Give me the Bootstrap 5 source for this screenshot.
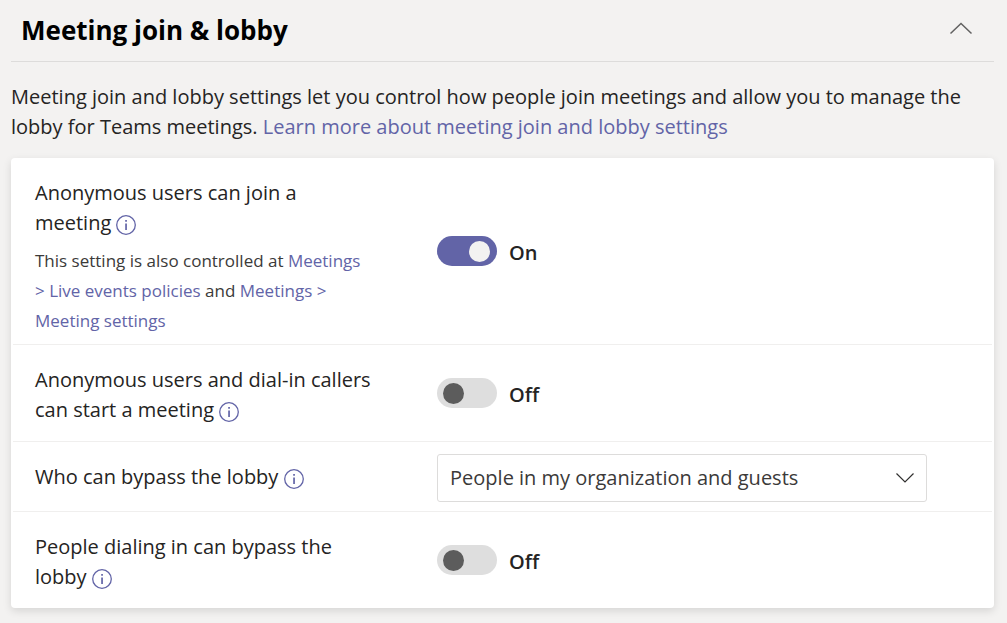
<!DOCTYPE html>
<html lang="en">
<head>
<meta charset="utf-8">
<meta name="viewport" content="width=device-width, initial-scale=1">
<title>Meeting join &amp; lobby</title>
<link href="https://cdn.jsdelivr.net/npm/bootstrap@5.3.0/dist/css/bootstrap.min.css" rel="stylesheet">
<style>
body{background:#f3f2f1;color:#252423;font:20px/30px "Open Sans",sans-serif}
a{color:#6264a7;text-decoration:none}
a:hover{text-decoration:underline}
.policy-section{padding:0 13px 14px 11px}
.section-head{padding:0 18px 2px 10px;height:62px;border-bottom:1px solid #dddcdb}
.section-title{font-size:26px;font-weight:700;line-height:36px;color:#000}
.section-intro{margin:20px 0 16px}
.collapse-btn{color:#616161;line-height:0}
.settings-card{border:0;border-radius:4px;padding:0 2px;box-shadow:0 3px 8px rgba(0,0,0,.12)}
.setting-row{padding:0 22px}
.setting-row + .setting-row{border-top:1px solid #f0efee}
.setting-name{flex:0 0 43%;padding:20px 64px 16px 0}
.setting-name label{display:inline}
.setting-control{flex:1 1 0;min-width:0}
.has-note .setting-name{padding-bottom:8px}
.has-select .setting-name{padding:20px 64px 19px 0}
.has-select .setting-control{padding:12px 0 9px}
.setting-note{font-size:17px;margin:8px 0 0;color:#3b3a39}
.info-btn{color:#6264a7;line-height:0;vertical-align:-5px}
.info-btn svg{display:block}
.form-switch .form-check-input.policy-toggle{width:60px;height:30px;margin:0;border:0;background-color:#dedede;background-size:60px 30px;background-position:center;
background-image:url("data:image/svg+xml,%3csvg xmlns='http://www.w3.org/2000/svg' viewBox='0 0 60 30'%3e%3ccircle cx='16.5' cy='15.5' r='10.5' fill='%235c5c5c'/%3e%3c/svg%3e")}
.form-switch .form-check-input.policy-toggle:checked{background-color:#6264a7;
background-image:url("data:image/svg+xml,%3csvg xmlns='http://www.w3.org/2000/svg' viewBox='0 0 60 30'%3e%3ccircle cx='42.5' cy='15.5' r='10.5' fill='%23f3f2f1'/%3e%3c/svg%3e")}
.toggle-state{font-weight:600;padding:3px 0 0 12px}
.form-select.policy-select{display:block;width:92%;height:48px;padding:8px 40px 8px 12px;font-size:20px;line-height:30px;color:#3b3a39;border:1px solid #dddcdb;border-radius:3px;background-color:#fff;background-size:20px 12px;background-position:right 11px center;
background-image:url("data:image/svg+xml,%3csvg xmlns='http://www.w3.org/2000/svg' viewBox='0 0 20 12'%3e%3cpath d='M1.5 1.5 10 10l8.500-8.500' fill='none' stroke='%23323130' stroke-width='1.200'/%3e%3c/svg%3e")}
@media (max-width:767px){
.setting-row{flex-direction:column;align-items:stretch!important}
.setting-name{flex:none;padding-right:0}
.setting-control{padding-bottom:16px}
.form-select.policy-select{width:100%}
}
</style>
</head>
<body>
<svg class="d-none" aria-hidden="true">
  <symbol id="info" viewBox="0 0 20 20"><circle cx="10" cy="10" r="9.300" fill="none" stroke="currentColor" stroke-width="1.300"/><path d="M9.200 5h1.700v1.700H9.200zM9.200 8.500h1.700V15H9.200z" fill="currentColor"/></symbol>
</svg>
<main class="policy-section">
  <header class="section-head d-flex align-items-center justify-content-between">
    <h2 class="section-title mb-0">Meeting join &amp; lobby</h2>
    <button type="button" class="collapse-btn btn p-0 border-0" aria-label="Collapse section" aria-expanded="true">
      <svg width="30" height="16" viewBox="0 0 30 16" fill="none" stroke="currentColor" stroke-width="1.500"><path d="M4.500 11.500 15 1.500l10.500 10"/></svg>
    </button>
  </header>
  <p class="section-intro">Meeting join and lobby settings let you control how people join meetings and allow you to manage the lobby for Teams meetings. <a href="#">Learn more about meeting join and lobby settings</a></p>

  <div class="settings-card card">
    <div class="setting-row has-note d-flex align-items-center">
      <div class="setting-name">
        <label for="anonJoin">Anonymous users can join a meeting</label>
        <button type="button" class="info-btn btn p-0 border-0" aria-label="More information"><svg width="20" height="20"><use href="#info"/></svg></button>
        <p class="setting-note">This setting is also controlled at <a href="#">Meetings &gt; Live events policies</a> and <a href="#">Meetings &gt; Meeting settings</a></p>
      </div>
      <div class="setting-control form-switch d-flex align-items-center p-0">
        <input class="policy-toggle form-check-input" type="checkbox" role="switch" id="anonJoin" checked>
        <label class="toggle-state" for="anonJoin">On</label>
      </div>
    </div>
    <div class="setting-row d-flex align-items-center">
      <div class="setting-name">
        <label for="anonStart">Anonymous users and dial-in callers can start a meeting</label>
        <button type="button" class="info-btn btn p-0 border-0" aria-label="More information"><svg width="20" height="20"><use href="#info"/></svg></button>
      </div>
      <div class="setting-control form-switch d-flex align-items-center p-0">
        <input class="policy-toggle form-check-input" type="checkbox" role="switch" id="anonStart">
        <label class="toggle-state" for="anonStart">Off</label>
      </div>
    </div>
    <div class="setting-row has-select d-flex align-items-center">
      <div class="setting-name">
        <label for="bypass">Who can bypass the lobby</label>
        <button type="button" class="info-btn btn p-0 border-0" aria-label="More information"><svg width="20" height="20"><use href="#info"/></svg></button>
      </div>
      <div class="setting-control">
        <select class="policy-select form-select" id="bypass"><option>People in my organization and guests</option></select>
      </div>
    </div>
    <div class="setting-row d-flex align-items-center">
      <div class="setting-name">
        <label for="dialIn">People dialing in can bypass the lobby</label>
        <button type="button" class="info-btn btn p-0 border-0" aria-label="More information"><svg width="20" height="20"><use href="#info"/></svg></button>
      </div>
      <div class="setting-control form-switch d-flex align-items-center p-0">
        <input class="policy-toggle form-check-input" type="checkbox" role="switch" id="dialIn">
        <label class="toggle-state" for="dialIn">Off</label>
      </div>
    </div>
  </div>
</main>
<script src="https://cdn.jsdelivr.net/npm/bootstrap@5.3.0/dist/js/bootstrap.bundle.min.js"></script>
</body>
</html>
